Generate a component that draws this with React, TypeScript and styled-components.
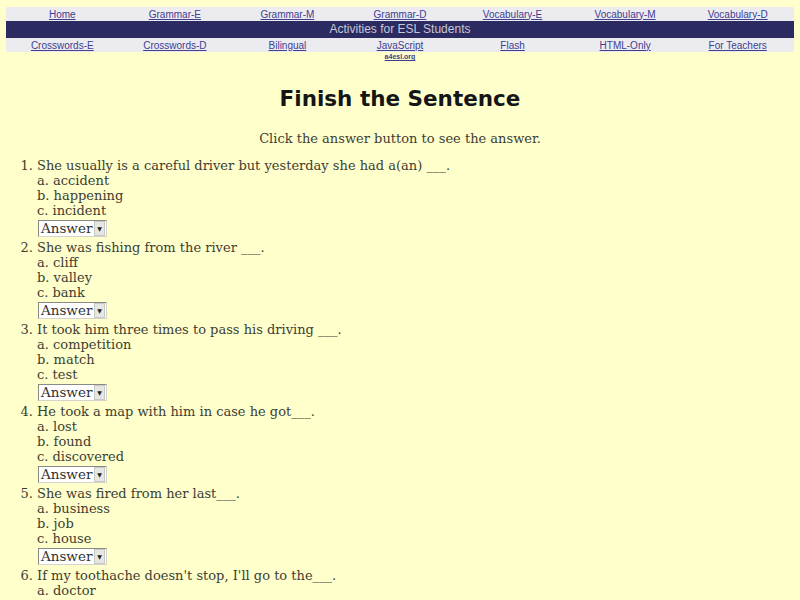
import React from "react";
import styled, { createGlobalStyle } from "styled-components";

const GlobalStyle = createGlobalStyle`
    body {
        margin     : 0;
        padding    : 6px 6px 0;
        background : #ffffcc;
        color      : #3d3d33;
        font-family: "DejaVu Serif", serif;
    }
`;

const Nav = styled.div`
    display        : flex;
    flex-direction : column;
    font-family    : "Liberation Sans", Arial, sans-serif;
    font-size      : 10px;
    margin-top     : 1px;
`;

const LinkRow = styled.div`
    display               : grid;
    grid-template-columns : repeat(7, 1fr);
    background            : #ecebf0;
    height                : 14px;
    align-items           : center;
`;

const Cell = styled.div`
    text-align : center;
`;

const NavLink = styled.a`
    color           : #404090;
    text-decoration : underline;
`;

const Banner = styled.div`
    background  : #2b2b61;
    color       : #c8c8d8;
    height      : 17px;
    line-height : 17px;
    text-align  : center;
    font-size   : 12px;
`;

const SubLink = styled.div`
    display               : grid;
    grid-template-columns : repeat(7, 1fr);
    font-size             : 7px;
    font-weight           : bold;
    height                : 10px;
    line-height           : 10px;
`;

const Title = styled.h1`
    font-family : "DejaVu Sans", sans-serif;
    font-weight : bold;
    font-size   : 21.5px;
    color       : #151515;
    text-align  : center;
    margin      : 21px 0 0;
    line-height : 32px;
`;

const Intro = styled.p`
    text-align  : center;
    font-size   : 13px;
    margin      : 15px 0 0;
    line-height : 18px;
`;

const List = styled.ol`
    margin      : 10px 0 0;
    padding     : 0 0 0 31px;
    font-size   : 13px;
    line-height : 15px;
`;

const Item = styled.li``;

const Choice = styled.div``;

const Picker = styled.span`
    display     : inline-flex;
    align-items : center;
    box-sizing  : border-box;
    margin      : 2px 0 3px 1px;
    height      : 17px;
    width       : 69px;
    padding     : 0 1px 0 2px;
    border      : 1px solid #8a8a84;
    border-right-color  : #d4d4cc;
    border-bottom-color : #d4d4cc;
    background  : #ffffff;
    font-size   : 13.5px;
    line-height : 15px;
    color       : #333333;
    vertical-align : top;
`;

const Arrow = styled.span`
    display         : inline-flex;
    align-items     : center;
    justify-content : center;
    width           : 9px;
    height          : 13px;
    margin-left     : auto;
    background      : #e6e6e2;
    border          : 1px solid #c8c8c4;
    font-size       : 6px;
    color           : #222;
`;

const topLinks = ["Home", "Grammar-E", "Grammar-M", "Grammar-D", "Vocabulary-E", "Vocabulary-M", "Vocabulary-D"];
const bottomLinks = ["Crosswords-E", "Crosswords-D", "Bilingual", "JavaScript", "Flash", "HTML-Only", "For Teachers"];

const questions = [
    { q: "She usually is a careful driver but yesterday she had a(an) ___.", a: ["accident", "happening", "incident"] },
    { q: "She was fishing from the river ___.", a: ["cliff", "valley", "bank"] },
    { q: "It took him three times to pass his driving ___.", a: ["competition", "match", "test"] },
    { q: "He took a map with him in case he got___.", a: ["lost", "found", "discovered"] },
    { q: "She was fired from her last___.", a: ["business", "job", "house"] },
    { q: "If my toothache doesn't stop, I'll go to the___.", a: ["doctor", "dentist", "nurse"] },
];

const App = () => (
    <>
        <GlobalStyle />
        <Nav>
            <LinkRow>
                {topLinks.map(l => <Cell key={l}><NavLink href="#">{l}</NavLink></Cell>)}
            </LinkRow>
            <Banner>Activities for ESL Students</Banner>
            <LinkRow>
                {bottomLinks.map(l => <Cell key={l}><NavLink href="#">{l}</NavLink></Cell>)}
            </LinkRow>
            <SubLink>
                <span /><span /><span />
                <Cell><NavLink href="#">a4esl.org</NavLink></Cell>
            </SubLink>
        </Nav>

        <Title>Finish the Sentence</Title>
        <Intro>Click the answer button to see the answer.</Intro>

        <List>
            {questions.map(item => (
                <Item key={item.q}>
                    {item.q}
                    {item.a.map((c, i) => <Choice key={c}>{"abc"[i]}. {c}</Choice>)}
                    <Picker>Answer<Arrow>▼</Arrow></Picker>
                </Item>
            ))}
        </List>
    </>
);

export default App;
